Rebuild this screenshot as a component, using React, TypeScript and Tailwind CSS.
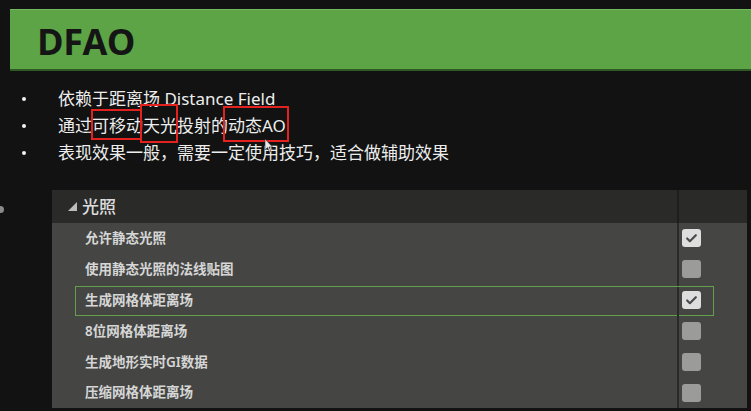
import { Check } from "lucide-react";

const rows = [
  { label: "允许静态光照", checked: true },
  { label: "使用静态光照的法线贴图", checked: false },
  { label: "生成网格体距离场", checked: true, active: true },
  { label: "8位网格体距离场", checked: false },
  { label: "生成地形实时GI数据", checked: false },
  { label: "压缩网格体距离场", checked: false },
];

const Bullet = ({ children }: { children: React.ReactNode }) => (
  <li className="relative flex items-center h-[27px]">
    <span className="absolute left-[-36px] w-[4px] h-[4px] rounded-full bg-[#f2f2f2]" />
    {children}
  </li>
);

const Box = ({ children, className }: { children: React.ReactNode; className: string }) => (
  <span className="relative">
    {children}
    <span className={`absolute border-2 border-[#e3211f] ${className}`} />
  </span>
);

const CheckBox = ({ checked }: { checked: boolean }) => (
  <div
    className={`w-[19px] h-[18px] rounded-[3px] flex items-center justify-center ${
      checked ? "bg-[#dedede]" : "bg-[#9b9c9a]"
    }`}
  >
    {checked && <Check size={13} strokeWidth={4} className="text-[#4a4a4a]" />}
  </div>
);

export default function App() {
  return (
    <div
      className="relative w-[751px] h-[411px] overflow-hidden bg-[#111211] flex flex-col"
      style={{ fontFamily: '"Noto Sans", "Noto Sans CJK SC", sans-serif' }}
    >
      <span className="absolute left-[-3px] top-[206px] w-[7px] h-[7px] rounded-full bg-[#8a8a8a]" />

      <div className="mt-[9px] ml-[10px] h-[62px] bg-[#5ca445] border-t border-[#72b85c] border-b-2 border-b-[#2e5a24] flex items-center pl-[27px] pt-[5px]">
        <h1
          className="text-[36px] font-bold text-[#141514] leading-none tracking-[-0.5px]"
          style={{ fontFamily: '"Open Sans", sans-serif' }}
        >
          DFAO
        </h1>
      </div>

      <ul className="mt-[14px] ml-[58px] text-[17px] text-[#ededed] leading-none">
        <Bullet>依赖于距离场 Distance Field</Bullet>
        <Bullet>
          通过
          <Box className="left-[-1px] right-[1px] top-[-8px] bottom-[-6px]">可移动</Box>
          <Box className="left-[-3px] right-[-1px] top-[-13px] bottom-[-9px]">天光</Box>
          投射的
          <Box className="left-[-5px] right-[-3px] top-[-11px] bottom-[-8px]">动态AO</Box>
        </Bullet>
        <Bullet>表现效果一般，需要一定使用技巧，适合做辅助效果</Bullet>
      </ul>

      <svg className="absolute left-[264px] top-[138px]" width="10" height="15" viewBox="0 0 10 15">
        <path d="M1 1 L1 12 L3.5 9.5 L5.5 14 L7 13.3 L5 9 L8.5 9 Z" fill="#e8e8e8" stroke="#333" strokeWidth="0.6" />
      </svg>

      <div className="mt-[24px] ml-[52px] w-[695px] h-[218px] flex flex-col">
        <div className="h-[33px] flex bg-[#2a2b29]">
          <div className="w-[625px] flex items-center pl-[16px] gap-[5px] text-[17px] text-[#dcdcdc]">
            <svg width="9" height="9" viewBox="0 0 9 9">
              <path d="M9 0 L9 9 L0 9 Z" fill="#bdbdbd" />
            </svg>
            <span className="font-medium">光照</span>
          </div>
          <div className="w-[2px] bg-[#1e1f1d]" />
          <div className="flex-1" />
        </div>
        <div className="flex-1 flex flex-col bg-[#454644]">
          {rows.map((row) => (
            <div key={row.label} className="relative flex-1 flex">
              <div className="w-[625px] flex items-center pl-[33px] text-[13.5px] font-semibold text-[#d6d6d6]">
                {row.label}
              </div>
              <div className="w-[2px] bg-[#2a2b29]" />
              <div className="flex-1 flex items-center pl-[3px]">
                <CheckBox checked={row.checked} />
              </div>
              {row.active && (
                <div className="absolute left-[23px] w-[639px] top-[1px] bottom-[-1px] border border-[#62a04c]" />
              )}
            </div>
          ))}
        </div>
      </div>
    </div>
  );
}
